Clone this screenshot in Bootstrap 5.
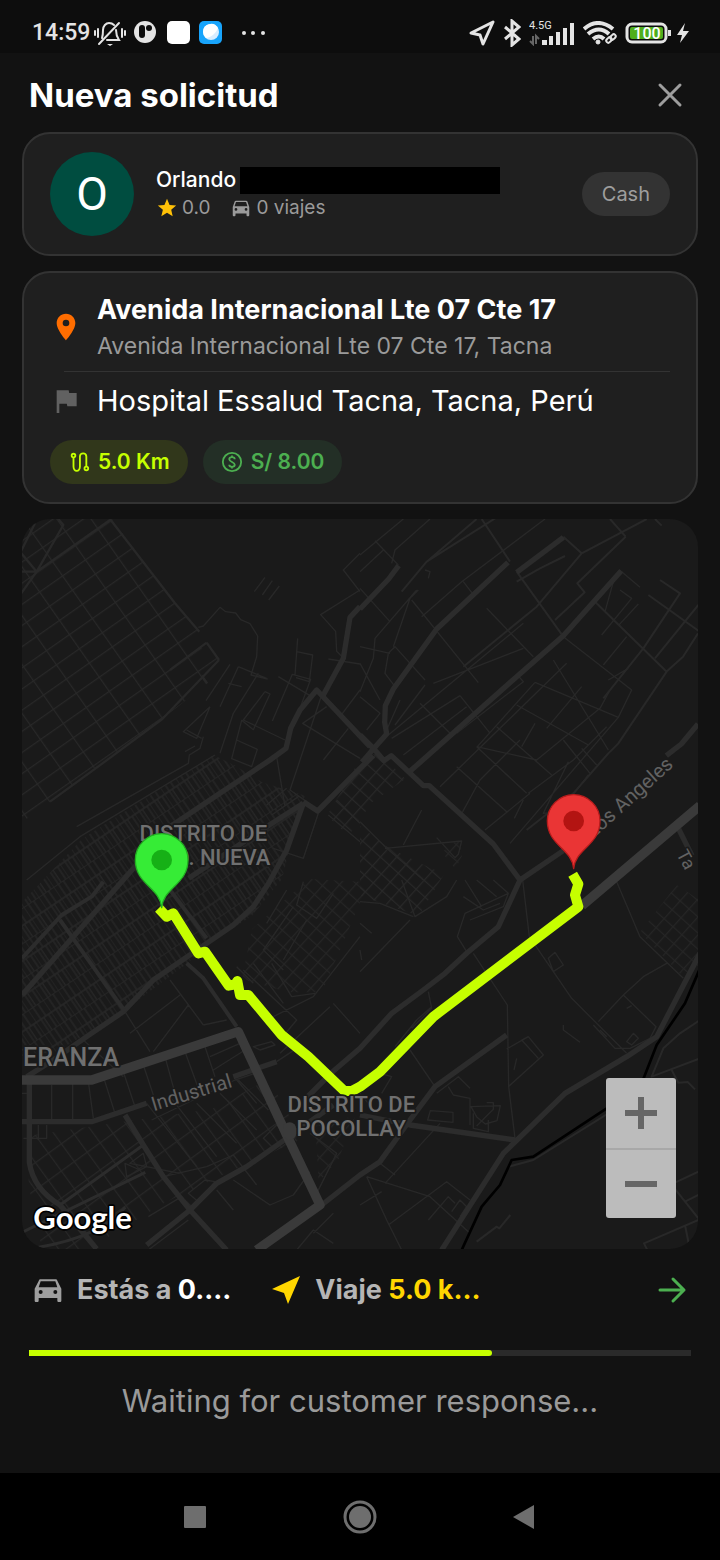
<!DOCTYPE html>
<html lang="es">
<head>
  <meta charset="UTF-8">
  <meta name="viewport" content="width=device-width, initial-scale=1.0">
  <title>Nueva solicitud</title>
  <link href="https://cdn.jsdelivr.net/npm/bootstrap@5.3.0/dist/css/bootstrap.min.css" rel="stylesheet">
  <style>
    body {
      background: #121212;
      color: #fff;
      font-family: Inter, "Open Sans", sans-serif;
    }
    svg {
      display: block;
      flex-shrink: 0;
    }
    .status-bar {
      height: 53px;
      padding: 12px 30px 0 32px;
      background: #0d0d0d;
      color: #e4e4e4;
      font-family: Roboto, sans-serif;
    }
    .clock {
      font-size: 23px;
      line-height: 42px;
      font-weight: 500;
    }
    .page-head {
      height: 79px;
      padding: 4px 34px 0 29px;
    }
    .page-head h1 {
      font-size: 33px;
      line-height: 40px;
      font-weight: 700;
    }
    .icon-btn {
      background: none;
      border: 0;
      padding: 0;
    }
    .content {
      padding: 0 22px;
      gap: 15px;
    }
    .panel {
      background: #1f1f1f;
      border: 2px solid #333;
      border-radius: 28px;
      padding: 18px 26px;
    }
    .avatar {
      width: 84px;
      height: 84px;
      background: #004d40;
      font-family: Roboto, sans-serif;
      font-size: 46px;
    }
    .person-info {
      padding-left: 22px;
    }
    .person {
      font-size: 21px;
      line-height: 28px;
      font-weight: 500;
    }
    .hidden-name {
      width: 260px;
      height: 27px;
      background: #000;
    }
    .stats {
      font-size: 19px;
      line-height: 28px;
      color: #9a9a9a;
    }
    .cash {
      height: 44px;
      padding: 0 20px;
      background: #333;
      color: #9e9e9e;
      font-size: 20px;
    }
    .stop-icon {
      width: 47px;
    }
    .stop-title {
      font-size: 27px;
      line-height: 38px;
      font-weight: 700;
    }
    .stop-address {
      font-size: 23px;
      line-height: 34px;
      color: #9a9a9a;
    }
    .stop-target {
      font-size: 29px;
      line-height: 40px;
      margin-top: 9px;
    }
    .divider {
      height: 1px;
      margin: 8px 0 0 14px;
      background: #333;
    }
    .pills {
      gap: 15px;
      margin-top: 19px;
    }
    .pill {
      height: 44px;
      padding: 0 18px;
      gap: 8px;
      font-size: 21px;
      font-weight: 600;
    }
    .pill-distance {
      background: #31371b;
      color: #c6ff00;
    }
    .pill-price {
      background: #232f26;
      color: #4caf50;
    }
    .map {
      border-radius: 28px;
      background: #1a1a1a;
      min-height: 400px;
    }
    .map-label {
      font-family: Roboto, sans-serif;
      font-weight: 500;
      font-size: 66px;
      fill: #707070;
      stroke: #1a1a1a;
      stroke-width: 10px;
      paint-order: stroke;
      text-anchor: middle;
    }
    .map-area {
      font-size: 75px;
      text-anchor: end;
    }
    .map-street {
      font-size: 60px;
      font-weight: 400;
      fill: #626262;
    }
    .map-cross {
      font-size: 54px;
    }
    .map-brand {
      font-family: Lato, sans-serif;
      font-weight: 700;
      font-size: 93px;
      fill: #fff;
      stroke: #000;
      text-anchor: start;
    }
    .zoom-box {
      right: 22px;
      bottom: 31px;
      width: 70px;
      border-radius: 3px;
      background: #bcbcbc;
    }
    .zoom-box button {
      height: 70px;
    }
    .zoom-box button + button {
      border-top: 2px solid #a8a8a8;
    }
    .trip-row {
      height: 82px;
      padding: 0 10px;
      font-size: 27px;
      font-weight: 700;
      color: #b5b5b5;
    }
    .trip {
      gap: 13px;
      margin-right: 39px;
    }
    .trip-row .gold {
      color: #ffd600;
    }
    .wait {
      padding: 19px 29px 49px;
    }
    .wait .progress {
      height: 6px;
      border-radius: 0;
      background: #2a2a2a;
    }
    .wait .progress-bar {
      background: #c6ff00;
      border-radius: 0 3px 3px 0;
    }
    .wait p {
      font-size: 31px;
      line-height: 46px;
      margin: 22px 0 0;
      color: #9a9a9a;
    }
    .system-nav {
      height: 87px;
      padding: 0 16px;
      background: #000;
    }
    .system-nav button {
      width: 165px;
    }
  </style>
</head>
<body>

  <div class="d-flex flex-column min-vh-100">

    <!-- Phone status bar -->
    <div class="status-bar d-flex justify-content-between align-items-center flex-shrink-0">
      <div class="d-flex align-items-center">
        <span class="clock">14:59</span>
        <svg class="ms-1" width="32" height="28" viewBox="0 0 32 28" fill="none" stroke="#e4e4e4" stroke-width="2" stroke-linecap="round">
          <path d="M8 19c1-3 1-5 1-8 0-4 3-7 6-7 2 0 4 1 5 2M22 11c0 4 1 7 3 10H13M5 25L25 4"/>
          <path d="M1 12v4M4 10v8M28 10v8M31 12v4"/>
          <path d="M13 25h6l-3 2z" fill="#e4e4e4" stroke="none"/>
        </svg>
        <svg class="ms-2" width="23" height="23" viewBox="0 0 23 23">
          <circle cx="11" cy="11" r="11" fill="#e4e4e4"/>
          <rect x="5" y="4" width="6" height="13" rx="3" fill="#0d0d0d"/>
          <circle cx="15" cy="7" r="3" fill="#0d0d0d"/>
        </svg>
        <svg class="ms-2" width="26" height="23" viewBox="0 0 26 23"><rect x="2" width="23" height="23" rx="5" fill="#fff"/></svg>
        <svg class="ms-2" width="23" height="23" viewBox="0 0 23 23">
          <rect width="23" height="23" rx="5" fill="#18a4fb"/>
          <circle cx="12" cy="11" r="8" fill="#d9edff"/>
          <path d="M4 11a8 8 0 0 1 15-4c-2 5-6 9-12 10a8 8 0 0 1-3-6z" fill="#fff"/>
        </svg>
        <svg class="ms-3" width="32" height="8" viewBox="0 0 32 8" fill="#e4e4e4">
          <circle cx="6" cy="4" r="2"/><circle cx="15" cy="4" r="2"/><circle cx="25" cy="4" r="2"/>
        </svg>
      </div>
      <div class="d-flex align-items-center gap-2">
        <svg width="26" height="26" viewBox="0 0 26 26" fill="none" stroke="#e4e4e4" stroke-width="3" stroke-linejoin="round"><path d="M2 13L24 2 14 24 11 15z"/></svg>
        <svg width="18" height="28" viewBox="0 0 18 28" fill="none" stroke="#e4e4e4" stroke-width="3"><path d="M2 8l14 12-7 6V2l7 6L2 20"/></svg>
        <svg width="46" height="26" viewBox="0 0 46 26" fill="#e4e4e4">
          <text x="0" y="9" font-size="11" font-family="Roboto">4.5G</text>
          <path d="M13 20h5v5h-5zM20 16h4v9h-4zM27 12h4v13h-4zM34 8h4v17h-4zM41 3h4v22h-4z"/>
          <path d="M4 16v8l-3-3M7 24v-8l3 3" fill="none" stroke="#666" stroke-width="2"/>
        </svg>
        <svg width="34" height="24" viewBox="0 0 34 24" fill="none" stroke="#e4e4e4" stroke-width="4">
          <path d="M1 8q14-12 29 0M5 13q11-9 21 0M10 18q6-5 11 0"/>
          <circle cx="15" cy="21" r="2" fill="#e4e4e4" stroke-width="1"/>
          <g stroke-width="2"><rect x="23" y="17" width="6" height="4" rx="2" transform="rotate(-45 26 19)"/><rect x="27" y="14" width="6" height="4" rx="2" transform="rotate(-45 30 16)"/></g>
        </svg>
        <svg width="65" height="24" viewBox="0 0 65 24">
          <rect x="2" y="3" width="39" height="18" rx="5" fill="none" stroke="#e4e4e4" stroke-width="3"/>
          <rect x="5" y="6" width="33" height="12" rx="2" fill="#4fae1c"/>
          <path d="M43 9h3v6h-3zM60 2L52 14h5l-2 8 9-12h-6z" fill="#e4e4e4"/>
          <text x="22" y="18" text-anchor="middle" font-size="16" font-weight="500" font-family="Roboto" fill="#fff">100</text>
        </svg>
      </div>
    </div>

    <header class="page-head d-flex justify-content-between align-items-center flex-shrink-0">
      <h1 class="mb-0">Nueva solicitud</h1>
      <button type="button" class="icon-btn" aria-label="Cerrar">
        <svg width="32" height="32" viewBox="0 0 32 32" stroke="#9e9e9e" stroke-width="3" stroke-linecap="round"><path d="M6 6l20 20M26 6L6 26"/></svg>
      </button>
    </header>

    <main class="content d-flex flex-column flex-grow-1">

      <section class="panel d-flex align-items-center">
        <div class="avatar rounded-circle d-flex align-items-center justify-content-center flex-shrink-0">O</div>
        <div class="person-info flex-grow-1">
          <div class="d-flex align-items-center person">
            <span>Orlando</span>
            <span class="hidden-name ms-1"></span>
          </div>
          <div class="stats d-flex align-items-center">
            <svg width="22" height="22" viewBox="0 0 24 24" fill="#ffc107"><path d="M12 17.3l6.2 3.7-1.6-7L22 9.200l-7.200-.6L12 2 9.200 8.600 2 9.200l5.500 4.800-1.700 7z"/></svg>
            <span class="ms-1 me-3">0.0</span>
            <svg class="ms-1" width="22" height="22" viewBox="0 0 24 24" fill="#9a9a9a"><path d="M19 5c-.2-.6-.8-1-1.400-1H6.500c-.7 0-1.200.4-1.400 1L3 11v9c0 .6.4 1 1 1h1c.6 0 1-.4 1-1v-2h12v2c0 .6.400 1 1 1h1c.6 0 1-.4 1-1v-9zM6.500 15a1.500 1.500 0 1 1 0-3 1.500 1.500 0 0 1 0 3zm11 0a1.500 1.500 0 1 1 0-3 1.500 1.500 0 0 1 0 3zM5 10l1.500-4.500h11L19 10z"/></svg>
            <span class="ms-1">0 viajes</span>
          </div>
        </div>
        <span class="cash rounded-pill d-flex align-items-center">Cash</span>
      </section>

      <section class="panel">
        <div class="d-flex align-items-center">
          <div class="stop-icon flex-shrink-0">
            <svg width="32" height="32" viewBox="0 0 24 24" fill="#ff6d00"><path d="M12 2C8.100 2 5 5.100 5 9c0 5.200 7 13 7 13s7-7.800 7-13c0-3.900-3.100-7-7-7zm0 9.500a2.500 2.500 0 1 1 0-5 2.500 2.500 0 0 1 0 5z"/></svg>
          </div>
          <div>
            <div class="stop-title">Avenida Internacional Lte 07 Cte 17</div>
            <div class="stop-address">Avenida Internacional Lte 07 Cte 17, Tacna</div>
          </div>
        </div>
        <div class="divider"></div>
        <div class="d-flex align-items-center stop-target">
          <div class="stop-icon flex-shrink-0">
            <svg width="32" height="32" viewBox="0 0 24 24" fill="#616161"><path d="M14.400 6L14 4H5v17h2v-7h5.600l.4 2h7V6z"/></svg>
          </div>
          <div>Hospital Essalud Tacna, Tacna, Perú</div>
        </div>
        <div class="pills d-flex">
          <span class="pill pill-distance rounded-pill d-flex align-items-center">
            <svg width="22" height="22" viewBox="0 0 24 24" fill="none" stroke="#c6ff00" stroke-width="2"><circle cx="6" cy="5" r="2"/><circle cx="20" cy="19" r="2"/><path d="M6 7v10a3 4 0 0 0 7 0V6a3 3 0 0 1 7 0v11"/></svg>
            5.0 Km
          </span>
          <span class="pill pill-price rounded-pill d-flex align-items-center">
            <svg width="22" height="22" viewBox="0 0 24 24" fill="none" stroke="#4caf50" stroke-width="2"><circle cx="12" cy="12" r="10"/><path d="M15 9c0-3-6-3-6 0s6 3 6 6-6 3-6 0M12 5v2M12 17v2"/></svg>
            S/ 8.00
          </span>
        </div>
      </section>

      <section class="map position-relative overflow-hidden flex-grow-1">
        <svg class="position-absolute w-100 h-100" viewBox="0 0 2028 2190" preserveAspectRatio="xMidYMid slice" fill="none" stroke-linejoin="round">
          <defs>
            <pattern id="wide" width="84" height="52" patternUnits="userSpaceOnUse" patternTransform="rotate(-35)"><path d="M0 0H84M0 0V52" stroke="#282828" stroke-width="7"/></pattern>
            <pattern id="dense" width="54" height="88" patternUnits="userSpaceOnUse" patternTransform="rotate(-34)"><path d="M0 0H54M0 44H54M0 0V88M18 0V88M36 0V44M45 44V88M28 44V88" stroke="#272727" stroke-width="4"/></pattern>
            <pattern id="town" width="48" height="66" patternUnits="userSpaceOnUse" patternTransform="rotate(-36)"><path d="M0 0H48M0 0V66" stroke="#272727" stroke-width="7"/></pattern>
            <pattern id="small" width="36" height="36" patternUnits="userSpaceOnUse" patternTransform="rotate(-48)"><path d="M0 0H36M0 0V36" stroke="#282828" stroke-width="7"/></pattern>
          </defs>

          <!-- Street blocks -->
          <path fill="url(#wide)" d="M0 0H270L459 253 532 338 500 360 591 423 539 470 556 493 421 600 270 713 84 848 0 910z"/>
          <path fill="url(#dense)" d="M574 708L640 740 720 790 850 830 834 860 780 1080 690 1190 560 1275 500 1330 300 1480 100 1600 0 1610V1150L180 960z"/>
          <path fill="url(#town)" d="M20 1850L360 1800 570 1770 740 1680 840 1860 640 1950 430 2050 200 2190H60L20 2000z"/>
          <path fill="url(#small)" d="M1014 720L1070 700 1150 780 1050 850 980 950 915 890zM1014 920L1090 980 1230 1050 1270 1060 1190 1190 1014 1130z"/>
          <path fill="url(#small)" d="M1854 1240L1964 1098 2028 1140V1340L1980 1370zM860 1080L1040 1090 900 1420 800 1420 660 1380 690 1230z" opacity=".8"/>
          <path fill="url(#small)" d="M1260 1000L1310 960 1320 1010 1300 1050zM880 1820L1000 1790 950 1920 890 1990z" opacity=".8"/>

          <!-- Minor streets, top left -->
          <g transform="translate(-6 -27)" stroke="#282828" stroke-width="4">
            <path stroke-width="7" d="M5 185h45L270 30M50 185L0 255M50 185L0 125M50 185L130 45 115 27M45 40L0 130M270 27L465 280 538 365M597 450L427 627 275 740 90 875M560 398L597 450M545 497L562 520M450 480L560 398"/>
            <path d="M535 352l15-4 50-56 17 13 30 4 15 20 28 12 23 37-3 62-17 55 50 12M655 470L600 590M630 463L558 572M655 470L740 505M570 590L530 685 490 665 570 590M715 490L640 610 600 730M585 735L180 980 20 1110M665 530L625 520M735 545l15 7-50 107-35-28-30 115 60 24 17-52-62-28M735 545l-65 85 125 60M757 633l60-140 55 15-35 95M833 385l-8 110M830 425l48 10-10 80-40-12M775 500l100 60M905 555l-95 285 50 35M920 590l-72 50 172 105M985 655l-75 95M1020 130L970 180l50 65M1020 240L902 314l45 50 3 60 20 20M925 447l95 15M500 660l45 25M495 725l30-17M550 680l-10 35-32 20-3 25L170 950M770 740l25 150M740 885l60-50M755 915l80-55M735 202l-32 43M757 212l-30 43M778 228l-32 42M1020 540L960 620M895 910l-45 135-90-30M925 915l95 80M950 870l70 70"/>
          </g>

          <!-- Minor streets, top right -->
          <g transform="translate(1014 -27)" stroke="#282828" stroke-width="4">
            <path stroke-width="6" d="M125 245L200 155 350 27M200 155L445 0M365 27L450 155M470 185L610 380M610 80L665 130 530 290 310 470M665 130L860 27M750 27L797 80M905 47L885 27M797 80L652 220l22 27L585 330M470 215l70-40 75-37M900 210l60 40-110 165-120 150M865 255l150 107M1015 285L885 445M1014 370l-45 70-50 45M705 275L920 485 775 700 745 730 640 850 500 960"/>
            <path d="M130 27L0 135M210 27L105 120 95 160M45 92L115 165M70 120L0 185M185 320L305 215 555 27M100 410l50-145 25-25M155 270L355 518M170 240L45 385l-5 60-40 100M205 205l5-20-15-5M380 295L520 440M310 215l27 35M220 520L490 415M195 510L105 410 85 430l-10 60 30 40M105 645l90-120M85 675L490 340M120 570l-40 90M180 580l90 90M300 557l88 110M300 557L95 685M320 590L130 735M475 498l15 17-200 155M525 517l250 105 40-82L610 380M580 450l165 270M525 517L350 712M775 622L450 1000M665 530L560 655M750 540l-30 55-190 155L350 710M470 585l215 120M410 650L575 795M290 770L440 905M240 830L620 460M505 850L640 750 740 650M525 640l-40 70M350 710L500 850M800 380l-70 85M745 510l60-35M780 240l35 25-90 110M835 282l-60 65M760 215l-25 90M785 185l55 47M625 755L550 910l50-5 85-110M490 870l-27 55M300 920l60-110 120-120M610 690l80 100M665 715l45 50M375 960L510 850M0 235l90 100M0 460l60 110M0 410l90 20M75 1015l230-22-10 40-10 10-55-60M130 1005l55-105M0 935l80 80 110 95M0 560l60 50-40 50"/>
          </g>

          <!-- Minor streets, bottom left -->
          <g transform="translate(-6 1083)" stroke="#282828" stroke-width="4">
            <path d="M95 615v110M158 610v115M205 605l15 110M315 395l75 120M250 590l35 110M310 575l35 105M370 555l30 90M435 530l30 110M495 515l40 110M555 500l30 90M450 300L550 435M400 515L505 375M480 345L330 460M550 435L620 420M570 530l90-40M580 570l95-60M190 480l120 110M380 670l150 190M450 650l140 180M530 670l120 120M600 640l110 110M655 600l90 90M0 640h30M55 735v45M80 735v40H10M395 720l250-120 60-20M770 545l60-40-50-60M700 500l55-15 10 10-45 15zM650 600l60 70M385 1110l120-90M385 1010l100-60 30 30M360 870l-45-20 5 40 60-30-10-40-40 30 150 30M430 890l130-30 80-35 70 90M640 900l110 75 70-30 50-70M505 940l50-40 30 5-50 60zM590 930l50 60M730 775l40-40 40 30-50 40zM830 830l60 110 60-120-80-60M755 250l60 100 70-10M650 260l50 50M800 30l-60 100M850 5l-20 70 60 40L940 40M1020 170L880 350 740 420M670 270l160 150-50 60M700 250l90 120M820 80l-90 130 60 60M860 120L790 240M940 370l80 90M930 380L780 520M830 1110l50-60 60 40M880 1060l60-60"/>
          </g>

          <!-- Minor streets, bottom right -->
          <g transform="translate(1014 1083)" stroke="#282828" stroke-width="4">
            <path d="M488 0l20 170 72 105 55 80 165 165M340 220l102 155 4 245 19 155M445 620l105-95-45-55-65 37M505 470l-20 10 50 55M470 535l-8 35M770 5l70 165 130 125M715 425l75-80 98 95-18 35-60 30h-45L700 435M790 345l60-55 70-40M740 470l-20-20M610 435v15l50 37M800 485l20-25 15 15-20 20zM800 385l15-8M580 275l-15-40 20-18 25 38zM105 500l65-80 45-40M205 335l10 50-60 60M150 510l75 110M230 640l65-50 35 35M265 620l15 25 50 10v80M203 720l8-28 68 5v30zM333 680l88-3-10 45-35 10-25-20zM340 700v45l45 10v-35M380 668h20v20l-50 50M20 890l190 60 120 110M20 890l60 130 45 90M0 975l65-40M240 730L75 910M85 1035L260 905 330 960M205 1020l60-70 20 20M275 995l25-35 20 20-20 30M60 850l45 35M320 215l-28-45 23-70 130-60-15 40-100 40M310 50l60 40 50-20M315 0l50 80M350 0l60 50M400 0l45 40M150 120L0 275M0 130l35 30M160 110L60 70 0 65M290 0l-30 50-95 60-40-110M0 210l5 30M60 580l35 10-30 50M0 640l50 60"/>
            <path stroke-width="6" d="M1020 420l-60 40-50 45-35 85 145-55M935 570l20 38 28-2 22 22M350 1085l60-45 8 5 33-40M765 680l95 140 155 195M1015 875l-75 35M1015 945l-40 20M1015 1020L852 1090l10 20M975 1035l12 60M445 860l75-20 225-140"/>
          </g>

          <!-- Avenues -->
          <g stroke="#2c2c2c" stroke-width="16">
            <path d="M1014 263l-30 32-20 123-60 110M1044 683L884 513l-50 60-28 55-14 60-48 35-150 100-150 100L0 1428M844 853l-110 70-234 155M844 848l43 28 127-128 40-38M844 853l-50 140-54 100-46 70-60 55-80 55-160 110-90 95-110 75-100 70-80 50"/>
            <path stroke-width="12" d="M244 1088l-35 45-90 55L0 1318M114 1203l195 275M494 1333l50 45 100 145M444 1113l110 145"/>
            <path d="M1014 270L1100 180 1130 140M1458 130L1244 330 1114 510 1090 560 1088 610 1094 645 1054 690 1020 730M1624 55L1484 160M1798 155L1624 350 1484 473 1164 757M1014 648L1056 690 1086 725 1108 710 1204 800 1222 800 1414 975 1494 1083 1429 1223 1334 1303 1269 1363 1204 1413 1109 1483 1014 1588 930 1660 850 1740M1494 1083L1624 995"/>
            <path d="M0 1808h209l165-55M634 1673l130-45M22 1690v240Q34 2010 114 2058L224 2190M309 1788l55 90 60 95 80 100 110 120M374 2178l130-105 80-80 90-50 120-85 140-100M899 2058l115-90 60-40 90-125 75-100 215-155M1014 1788l150 30 315 45"/>
            <path stroke-width="9" d="M0 2140l370-180M114 2058l250-180M50 2185q180-30 260-120"/>
            <path d="M2034 1303L1904 1553 1814 1613 1629 1723 1444 1903 1259 2193"/>
            <path d="M2028 615l-50 60-45 35M1970 930l40 80"/>
          </g>

          <!-- Highway and railway -->
          <path stroke="#3a3a3a" stroke-width="28" d="M0 1683h209l440-145 145 310 100 210-190 135M2034 860L1680 1160"/>
          <path stroke="#3a3a3a" stroke-width="40" stroke-linecap="round" d="M803 1830v12"/>
          <path stroke="#000" stroke-width="8" d="M2034 1348l-45 105-85 125-45 115-105 75-220 145-65 10-35 75-55 65-60 130"/>

          <!-- Route -->
          <path stroke="#c6ff00" stroke-width="30" d="M410 1168L434 1193 454 1183 529 1303 549 1298 620 1400 640 1396 646 1386 654 1428 679 1428 779 1548 859 1613 967 1716 990 1716 1014 1703 1074 1658 1234 1493 1669 1163 1659 1128 1669 1095 1652 1066"/>

          <text class="map-label" x="544" y="965">DISTRITO DE</text>
          <text class="map-label" x="550" y="1038">CIUD. NUEVA</text>
          <text class="map-label" x="988" y="1778">DISTRITO DE</text>
          <text class="map-label" x="988" y="1850">POCOLLAY</text>
          <text class="map-label map-area" x="291" y="1641">ERANZA</text>
          <text class="map-label map-street" transform="translate(514 1740) rotate(-17)">Industrial</text>
          <text class="map-label map-street" transform="translate(1835 850) rotate(-42)">Los Angeles</text>
          <text class="map-label map-street map-cross" transform="translate(1976 1030) rotate(62)">Ta</text>
          <text class="map-label map-brand" x="34" y="2130">Google</text>

          <!-- Pins -->
          <g stroke-width="4">
            <path fill="#36ec36" stroke="#22b022" d="M419 1166c-5-60-79-70-79-143a79 79 0 0 1 158 0c0 73-74 83-79 143z"/>
            <circle cx="419" cy="1023" r="31" fill="#16b016"/>
            <path fill="#ea3535" stroke="#b71c1c" d="M1655 1049c-5-60-79-70-79-143a79 79 0 0 1 158 0c0 73-74 83-79 143z"/>
            <circle cx="1655" cy="906" r="31" fill="#b31412"/>
          </g>
        </svg>
        <div class="zoom-box position-absolute d-flex flex-column">
          <button type="button" class="icon-btn d-flex align-items-center justify-content-center" aria-label="Acercar">
            <svg width="32" height="32" viewBox="0 0 32 32" stroke="#666" stroke-width="6"><path d="M0 16h32M16 0v32"/></svg>
          </button>
          <button type="button" class="icon-btn d-flex align-items-center justify-content-center" aria-label="Alejar">
            <svg width="32" height="32" viewBox="0 0 32 32" stroke="#666" stroke-width="6"><path d="M0 16h32"/></svg>
          </button>
        </div>
      </section>
    </main>

    <div class="content flex-shrink-0">
      <div class="trip-row d-flex align-items-center">
        <div class="trip d-flex align-items-center">
          <svg width="32" height="32" viewBox="0 0 24 24" fill="#9e9e9e"><path d="M19 5c-.2-.6-.8-1-1.400-1H6.500c-.7 0-1.200.4-1.400 1L2 11v9c0 .6.4 1 1 1h1c.6 0 1-.4 1-1v-2h14v2c0 .6.400 1 1 1h1c.6 0 1-.4 1-1v-9zM6.500 15a1.500 1.500 0 1 1 0-3 1.500 1.500 0 0 1 0 3zm11 0a1.500 1.500 0 1 1 0-3 1.500 1.500 0 0 1 0 3zM5 10l1.500-4.500h11L19 10z"/></svg>
          <span>Estás a <span class="text-white">0.…</span></span>
        </div>
        <div class="trip d-flex align-items-center">
          <svg width="32" height="32" viewBox="0 0 32 32" fill="#ffd600"><path d="M2 15L30 2 18 30 14 19z"/></svg>
          <span>Viaje <span class="gold">5.0 k…</span></span>
        </div>
        <button type="button" class="icon-btn ms-auto" aria-label="Ver viaje">
          <svg width="32" height="32" viewBox="0 0 32 32" fill="none" stroke="#4caf50" stroke-width="3" stroke-linecap="round" stroke-linejoin="round"><path d="M4 16h24M17 5l11 11-11 11"/></svg>
        </button>
      </div>
    </div>

    <div class="wait flex-shrink-0">
      <div class="progress" role="progressbar" aria-label="Tiempo de espera" aria-valuenow="70" aria-valuemin="0" aria-valuemax="100">
        <div class="progress-bar" style="width: 70%"></div>
      </div>
      <p class="text-center">Waiting for customer response...</p>
    </div>

    <!-- Android navigation -->
    <nav class="system-nav d-flex justify-content-center align-items-center flex-shrink-0">
      <button type="button" class="icon-btn d-flex justify-content-center" aria-label="Recientes">
        <svg width="34" height="34" viewBox="0 0 34 34"><rect x="6" y="6" width="22" height="22" rx="1" fill="#6e6e6e"/></svg>
      </button>
      <button type="button" class="icon-btn d-flex justify-content-center" aria-label="Inicio">
        <svg width="34" height="34" viewBox="0 0 34 34"><circle cx="17" cy="17" r="15" fill="none" stroke="#6e6e6e" stroke-width="3"/><circle cx="17" cy="17" r="11" fill="#6e6e6e"/></svg>
      </button>
      <button type="button" class="icon-btn d-flex justify-content-center" aria-label="Volver">
        <svg width="34" height="34" viewBox="0 0 34 34"><path d="M5 17L26 5v24z" fill="#6e6e6e"/></svg>
      </button>
    </nav>
  </div>

  <script src="https://cdn.jsdelivr.net/npm/bootstrap@5.3.0/dist/js/bootstrap.bundle.min.js"></script>
</body>
</html>
